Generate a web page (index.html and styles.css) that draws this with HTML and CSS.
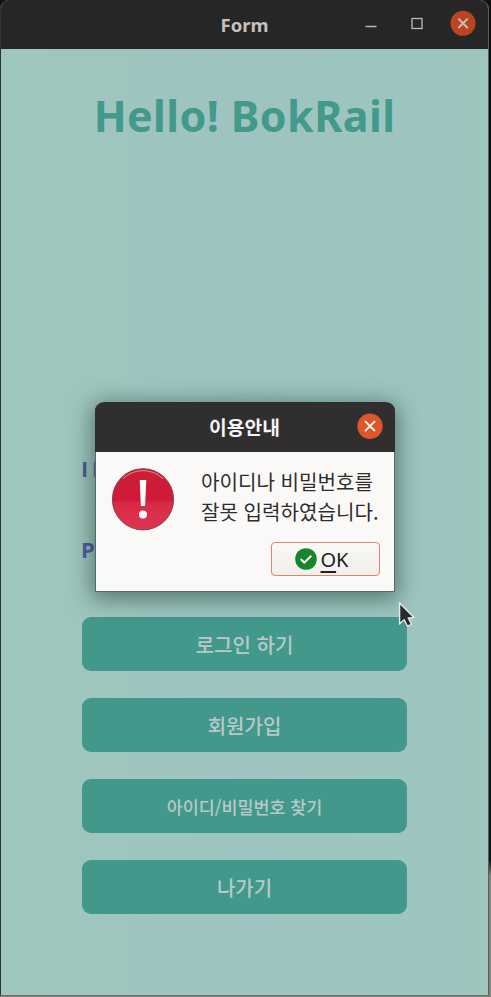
FILE: index.html
```html
<!DOCTYPE html>
<html lang="ko">
<head>
<meta charset="utf-8">
<title>Form</title>
<link rel="stylesheet" href="styles.css">
</head>
<body>
<main class="window">
  <header class="titlebar">
    <span class="title">Form</span>
    <div class="controls">
      <svg width="12" height="26" viewBox="0 0 12 26"><path d="M.5 16.5h11" stroke="#bdb9b6" stroke-width="1.4"/></svg>
      <svg width="12" height="26" viewBox="0 0 12 26"><rect x="1" y="8.5" width="10" height="10" fill="none" stroke="#bdb9b6" stroke-width="1.3"/></svg>
      <svg width="26" height="26" viewBox="0 0 26 26"><circle cx="13" cy="13.3" r="12.5" fill="#b94620"/><path d="M8.3 8.6l9.4 9.4M17.7 8.6l-9.4 9.4" stroke="#c9c0ba" stroke-width="1.9"/></svg>
    </div>
  </header>
  <section class="form">
    <h1>Hello! BokRail</h1>
    <div class="fields">
      <label>I D</label>
      <label>P W</label>
    </div>
    <div class="buttons">
      <button>로그인 하기</button>
      <button>회원가입</button>
      <button class="small">아이디/비밀번호 찾기</button>
      <button>나가기</button>
    </div>
  </section>
</main>
<section class="dialog">
  <header class="dialog-title">
    <span>이용안내</span>
    <svg class="dialog-close" width="26" height="26" viewBox="0 0 26 26"><circle cx="13" cy="13.2" r="12.7" fill="#de5629"/><path d="M8 8.2l10 10M18 8.2l-10 10" stroke="#fff" stroke-width="1.8"/></svg>
  </header>
  <div class="dialog-body">
    <svg class="alert" width="64" height="64" viewBox="0 0 64 64">
      <defs><linearGradient id="red" x2="0" y2="1"><stop offset="0" stop-color="#c91f35"/><stop offset=".52" stop-color="#d3193a"/><stop offset=".56" stop-color="#d92a45"/><stop offset="1" stop-color="#df3450"/></linearGradient></defs>
      <circle cx="32" cy="32.3" r="30.6" fill="url(#red)" stroke="#80424f" stroke-width="1"/>
      <path d="M12 11.7a28.8 28.8 0 0 1 40 0" fill="none" stroke="#e78994" stroke-width="1"/>
      <path d="M28.7 13h6.6l-1.2 26h-4.2z" fill="#fff"/><circle cx="32" cy="47.5" r="4" fill="#fff"/>
    </svg>
    <p>아이디나 비밀번호를<br>잘못 입력하였습니다.</p>
  </div>
  <button class="ok">
    <svg width="22" height="22" viewBox="0 0 22 22"><circle cx="11" cy="11" r="10.8" fill="#17862a"/><path d="M5.7 11l3.6 3.6 7-6.8" fill="none" stroke="#fff" stroke-width="2"/></svg>
    <span><u>O</u>K</span>
  </button>
</section>
<svg class="cursor" width="18" height="28" viewBox="0 0 18 28"><path d="M1.6 2v20.8l4.6-4 3.3 6.4 4-1.9-3.2-6.2 5.6-.7z" fill="#282828" stroke="#e6e9e8" stroke-width="1.4"/></svg>
</body>
</html>
```
FILE: styles.css
```css
* { box-sizing: border-box; }
body {
  position: relative;
  margin: 0;
  width: 491px;
  height: 997px;
  overflow: hidden;
  padding: 0 2px 1px 0;
  background: linear-gradient(#101112 0, #101413 860px, #85817f 876px, #85817f 100%);
  font-family: "Noto Sans", "Noto Sans CJK KR", sans-serif;
}
.window {
  height: 996px;
  display: flex;
  flex-direction: column;
  border-left: 1px solid #2b3535;
  border-right: 1px solid #52615f;
  border-bottom: 1px solid #65716f;
  border-radius: 9px 9px 0 0;
  overflow: hidden;
  background: #9ec6bf;
}
.titlebar {
  height: 49px;
  flex: none;
  display: grid;
  grid-template-columns: 1fr auto 1fr;
  align-items: center;
  padding: 0 12px 1px 0;
  background: #262626;
}
.title {
  grid-column: 2;
  margin-left: 12px;
  font-size: 18.5px;
  font-weight: 700;
  color: #c5c1be;
}
.controls {
  display: flex;
  justify-content: flex-end;
  align-items: center;
  margin-top: -2px;
}
.controls svg + svg { margin-left: 34px; }
.controls svg:last-child { margin-left: 27px; }
.form {
  flex: 1;
  display: flex;
  flex-direction: column;
  padding: 36px 81px 0;
  background: linear-gradient(90deg, #9fc7bd, #9dc4c0 50%, #9ec6bf);
}
h1 {
  margin: 0 -30px;
  height: 60px;
  line-height: 61px;
  text-align: center;
  font-size: 43px;
  font-weight: 700;
  letter-spacing: .4px;
  color: #43998b;
  white-space: nowrap;
}
.fields {
  margin-top: 308px;
  height: 164px;
  display: flex;
  flex-direction: column;
  gap: 51px;
}
label {
  height: 30px;
  line-height: 30px;
  font-family: "Open Sans", sans-serif;
  font-size: 22px;
  font-weight: 700;
  letter-spacing: -1px;
  margin-left: -1px;
  color: #50589d;
}
.buttons {
  display: flex;
  flex-direction: column;
  gap: 27px;
}
button { font: inherit; margin: 0; border: 0; }
.buttons button {
  width: 325px;
  height: 54px;
  padding: 1px 0 0;
  border-radius: 9px;
  background: #42998b;
  color: #b9c9ca;
  font-family: "Noto Sans CJK KR", sans-serif;
  font-size: 20px;
  font-weight: 500;
}
.buttons .small { font-size: 17.4px; }
.dialog {
  position: absolute;
  left: 95px;
  top: 402px;
  width: 300px;
  height: 190px;
  display: flex;
  flex-direction: column;
  border: 1px solid #566a66;
  border-top: 0;
  border-radius: 9px 9px 0 0;
  background: #faf9f8;
  box-shadow: 0 4px 22px 3px rgba(25, 55, 47, .55);
}
.dialog-title {
  height: 50px;
  margin: 0 -1px;
  display: grid;
  grid-template-columns: 1fr auto 1fr;
  align-items: center;
  padding: 0 12px 0 11px;
  border-radius: 9px 9px 0 0;
  background: #302e2f;
  color: #f4f4f4;
  font-family: "Noto Sans CJK KR", sans-serif;
  font-size: 19.3px;
  font-weight: 700;
}
.dialog-title span { grid-column: 2; }
.dialog-close { justify-self: end; margin-top: -2px; }
.dialog-body {
  display: flex;
  height: 90px;
  padding: 15px 0 0 15px;
}
.alert { flex: none; }
.dialog-body p {
  margin: 0 0 0 26px;
  font-family: "Noto Sans CJK KR", sans-serif;
  font-size: 20.1px;
  line-height: 30px;
  color: #2d2d2d;
  white-space: nowrap;
}
.ok {
  align-self: flex-end;
  margin-right: 14px;
  width: 109px;
  height: 34px;
  display: flex;
  align-items: center;
  justify-content: center;
  gap: 3px;
  padding: 0 7px 0 0;
  border: 1px solid #e08570;
  border-radius: 4px;
  background: linear-gradient(#faf9f7, #f1efeb);
  color: #202020;
  font-size: 20px;
}
.ok u { text-underline-offset: 4px; text-decoration-thickness: 1.5px; }
.cursor { position: absolute; left: 398px; top: 601px; }
```
